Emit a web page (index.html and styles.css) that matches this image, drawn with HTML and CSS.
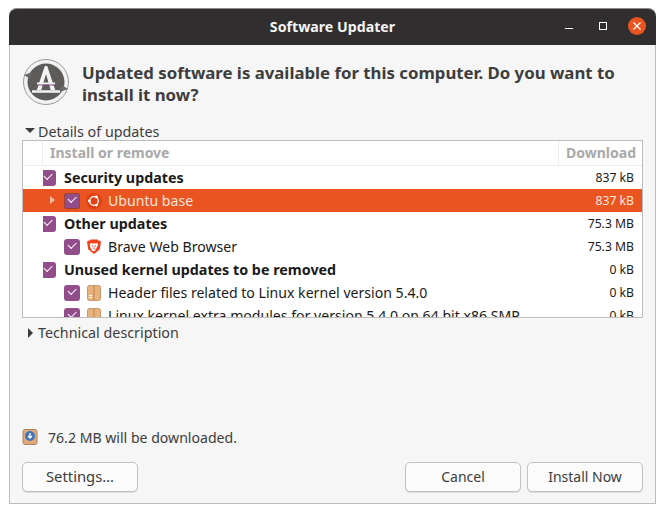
FILE: index.html
```html
<!DOCTYPE html>
<html lang="en">
<head>
    <meta charset="UTF-8">
    <title>Software Updater</title>
    <link rel="stylesheet" href="styles.css">
</head>
<body>

<div class="window">
    <div class="titlebar">
        <span class="title">Software Updater</span>
        <div class="controls">
            <svg class="ctl-min" width="10" height="10" viewBox="0 0 10 10"><path d="M1 7.500h8" stroke="#fff" stroke-width="1"/></svg>
            <svg class="ctl-max" width="10" height="10" viewBox="0 0 10 10"><rect x="1.500" y="1.500" width="7" height="7" fill="none" stroke="#fff"/></svg>
            <span class="close">
                <svg width="10" height="10" viewBox="0 0 10 10"><path d="M1.500 1.500l7 7M8.500 1.500l-7 7" stroke="#fff" stroke-width="1.200"/></svg>
            </span>
        </div>
    </div>

    <div class="content">
        <div class="head">
            <svg class="app-icon" width="48" height="48" viewBox="0 0 48 48">
                <circle cx="24" cy="24" r="22.500" fill="#f2f2f2" stroke="#9b9b9b" stroke-width="1"/>
                <circle cx="24" cy="24" r="18.500" fill="#5e5c5b"/>
                <path d="M2 17l8-3-2 7zM46 31l-8 3 2-7z" fill="#6d6b6a"/>
                <path d="M22.800 8h2.400l8 24h-4.500l-4.700-16-4.700 16H14.800z" fill="#f4f4f4"/>
                <path d="M10 33.500h28" stroke="#f4f4f4" stroke-width="2.500"/>
                <path d="M15 25.500h18" stroke="#f4f4f4" stroke-width="2"/>
                <path d="M15.500 27h17" stroke="#8a4a86" stroke-width="1"/>
            </svg>
            <h1>Updated software is available for this computer. Do you want to install it now?</h1>
        </div>

        <div class="expander first"><span class="arrow-down"></span><span class="exp-label">Details of updates</span></div>

        <div class="tree">
            <div class="tree-head">
                <span class="col-name">Install or remove</span>
                <span class="col-size">Download</span>
            </div>
            <div class="tree-body">
                <div class="row group">
                    <span class="check"></span>
                    <span class="name">Security updates</span>
                    <span class="size">837 kB</span>
                </div>
                <div class="row child selected">
                    <span class="arrow-small"></span>
                    <span class="check"></span>
                    <svg class="pkg" width="16" height="16" viewBox="0 0 16 16">
                        <circle cx="8" cy="8" r="8" fill="#df4114"/>
                        <circle cx="8" cy="8" r="4.300" fill="none" stroke="#fff" stroke-width="1.300"/>
                        <circle cx="3.300" cy="8" r="1.400" fill="#fff"/>
                        <circle cx="10.400" cy="3.900" r="1.400" fill="#fff"/>
                        <circle cx="10.400" cy="12.100" r="1.400" fill="#fff"/>
                    </svg>
                    <span class="name">Ubuntu base</span>
                    <span class="size">837 kB</span>
                </div>
                <div class="row group">
                    <span class="check"></span>
                    <span class="name">Other updates</span>
                    <span class="size">75.3 MB</span>
                </div>
                <div class="row child">
                    <span class="check"></span>
                    <svg class="pkg" width="16" height="16" viewBox="0 0 16 16">
                        <path d="M4.500 0.500h7l1 1.200 1.500-.2 1 1.500-1.300 7.500-5.700 4.500-5.700-4.500L1 3l1-1.500 1.500.2z" fill="#f1431f"/>
                        <path d="M4.500 4l2 .5h3l2-.5.500 2-1.500 3-1 1.500-.5 1.500h-3L5.500 10.500l-1-1.500L3.800 6z" fill="#fff"/>
                        <path d="M6 6.500l1.500 1M10 6.500l-1.500 1M8 8.500v2" stroke="#f1431f" stroke-width="1"/>
                    </svg>
                    <span class="name">Brave Web Browser</span>
                    <span class="size">75.3 MB</span>
                </div>
                <div class="row group">
                    <span class="check"></span>
                    <span class="name">Unused kernel updates to be removed</span>
                    <span class="size">0 kB</span>
                </div>
                <div class="row child">
                    <span class="check"></span>
                    <svg class="pkg" width="16" height="16" viewBox="0 0 16 16">
                        <rect x="1.500" y="0.500" width="13" height="15" rx="2" fill="#e9b27c" stroke="#c4996f"/>
                        <rect x="7" y="1" width="2" height="14" fill="#d39a63"/>
                        <path d="M3 10.500h3M3 12.500h3" stroke="#fff"/>
                    </svg>
                    <span class="name">Header files related to Linux kernel version 5.4.0</span>
                    <span class="size">0 kB</span>
                </div>
                <div class="row child">
                    <span class="check"></span>
                    <svg class="pkg" width="16" height="16" viewBox="0 0 16 16">
                        <rect x="1.500" y="0.500" width="13" height="15" rx="2" fill="#e9b27c" stroke="#c4996f"/>
                        <rect x="7" y="1" width="2" height="14" fill="#d39a63"/>
                    </svg>
                    <span class="name">Linux kernel extra modules for version 5.4.0 on 64 bit x86 SMP</span>
                    <span class="size">0 kB</span>
                </div>
            </div>
        </div>

        <div class="expander"><span class="arrow-right"></span>Technical description</div>

        <div class="status">
            <svg width="16" height="16" viewBox="0 0 16 16">
                <rect x="1" y="0.500" width="14" height="15" rx="2" fill="#e0a878" stroke="#a98561"/>
                <circle cx="8" cy="7" r="5" fill="#3f73b8"/>
                <path d="M8 4v4.500M6 7l2 2 2-2" fill="none" stroke="#fff" stroke-width="1.300"/>
            </svg>
            <span>76.2 MB will be downloaded.</span>
        </div>

        <div class="buttons">
            <button type="button" class="settings">Settings…</button>
            <div class="right-buttons">
                <button type="button">Cancel</button>
                <button type="button">Install Now</button>
            </div>
        </div>
    </div>
</div>

</body>
</html>
```

FILE: styles.css
```css
html, body {
    margin: 0;
    background: #fff;
}
body {
    font-family: "Noto Sans", sans-serif;
    font-size: 14px;
    color: #3d3d3d;
}
.window {
    width: 647px;
    height: 496px;
    margin: 8px 0 0 9px;
    box-sizing: border-box;
    border: 1px solid #bdbdbd;
    border-top: 0;
    border-radius: 8px 8px 0 0;
    display: flex;
    flex-direction: column;
    background: #f6f6f6;
}
.titlebar {
    height: 37px;
    margin: 0 -1px;
    flex: none;
    background: #302e2e;
    border-radius: 8px 8px 0 0;
    border-top: 1px solid #8f8d8d;
    box-sizing: border-box;
    position: relative;
    display: flex;
    align-items: center;
    justify-content: center;
}
.title {
    color: #f4f4f4;
    font-weight: 700;
    font-size: 14.200px;
    margin-top: -1px;
}
.controls {
    position: absolute;
    right: 10px;
    top: 8px;
    display: flex;
    align-items: center;
}
.ctl-min {
    margin-right: 24px;
}
.ctl-max {
    margin-right: 20px;
}
.close {
    width: 18px;
    height: 18px;
    border-radius: 50%;
    background: #e95420;
    display: flex;
    align-items: center;
    justify-content: center;
}
.content {
    flex: 1;
    display: flex;
    flex-direction: column;
    padding: 0 12px 11px;
}
.head {
    display: flex;
    align-items: flex-start;
    margin-top: 13px;
    height: 59px;
}
.app-icon {
    flex: none;
    margin-right: 12px;
}
h1 {
    margin: 4px 0 0;
    font-size: 16.800px;
    line-height: 22px;
    font-weight: 700;
    color: #3d3d3d;
}
.expander {
    height: 19px;
    line-height: 19px;
    display: flex;
    align-items: center;
    gap: 6px;
    font-size: 14.300px;
    padding-left: 4px;
}
.expander.first {
    height: 19px;
    margin-top: 4px;
}
.exp-label {
    margin-top: 1px;
}
.arrow-down {
    width: 0;
    height: 0;
    border-left: 5px solid transparent;
    border-right: 5px solid transparent;
    border-top: 5px solid #3d3d3d;
    margin-left: -1px;
    margin-right: -3px;
}
.arrow-right {
    width: 0;
    height: 0;
    border-top: 5px solid transparent;
    border-bottom: 5px solid transparent;
    border-left: 5px solid #3d3d3d;
    margin-left: 2px;
    margin-right: -1px;
}
.tree {
    height: 178px;
    box-sizing: border-box;
    border: 1px solid #bdbdbd;
    background: #fff;
    overflow: hidden;
    margin-bottom: 5px;
    flex: none;
}
.tree-head {
    height: 25px;
    box-sizing: border-box;
    display: flex;
    align-items: center;
    justify-content: space-between;
    border-bottom: 1px solid #ececec;
    color: #a9a9a9;
    font-weight: 700;
    font-size: 14px;
}
.col-name {
    padding-left: 7px;
    margin-left: 19px;
    border-left: 1px solid #ececec;
    line-height: 24px;
}
.col-size {
    padding: 0 6px 0 0;
    width: 84px;
    text-align: right;
    box-sizing: border-box;
    border-left: 1px solid #ececec;
    line-height: 24px;
}
.row {
    height: 23px;
    display: flex;
    align-items: center;
    color: #1a1a1a;
    position: relative;
}
.row.group {
    padding-left: 20px;
    font-weight: 700;
}
.row.child {
    padding-left: 41px;
}
.name {
    flex: 1;
    white-space: nowrap;
    font-size: 14.100px;
    margin-top: -1px;
}
.group .name {
    font-size: 14.300px;
}
.size {
    font-weight: 400;
    font-size: 12.200px;
    padding: 0 8px;
    color: #1a1a1a;
}
.check {
    flex: none;
    width: 16px;
    height: 16px;
    border-radius: 3px;
    background: #924d8b;
    margin-right: 6px;
    position: relative;
}
.check::after {
    content: "";
    position: absolute;
    left: 3.500px;
    top: 3.500px;
    width: 7px;
    height: 3.500px;
    border-left: 1.500px solid #fff;
    border-bottom: 1.500px solid #fff;
    transform: rotate(-45deg);
}
/* group checkbox is clipped by the first column edge */
.group .check {
    width: 13px;
    margin-right: 8px;
    border-radius: 0 3px 3px 0;
}
.group .check::after {
    left: 0.500px;
}
.pkg {
    flex: none;
    margin-right: 6px;
}
.selected {
    background: #e95420;
}
.selected .name, .selected .size {
    color: #fbe6de;
}
.selected .check {
    box-shadow: inset 0 0 0 1px #9c4432;
}
.arrow-small {
    position: absolute;
    left: 27px;
    top: 7px;
    border-top: 4.500px solid transparent;
    border-bottom: 4.500px solid transparent;
    border-left: 5px solid #f5b89f;
}
.status {
    margin-top: auto;
    display: flex;
    align-items: center;
    gap: 10px;
    height: 20px;
    font-size: 14.100px;
}
.buttons {
    display: flex;
    justify-content: space-between;
    margin-top: 15px;
}
.right-buttons {
    display: flex;
    gap: 6px;
}
button {
    width: 116px;
    height: 30px;
    box-sizing: border-box;
    border: 1px solid #c4c2c0;
    border-radius: 5px;
    background: #fbfbfb;
    font-family: "Noto Sans", sans-serif;
    font-size: 14px;
    color: #3d3d3d;
    padding: 0 0 2px;
    box-shadow: 0 1px 0 #dcdcdc;
}
.settings {
    font-size: 14.800px;
}
```
